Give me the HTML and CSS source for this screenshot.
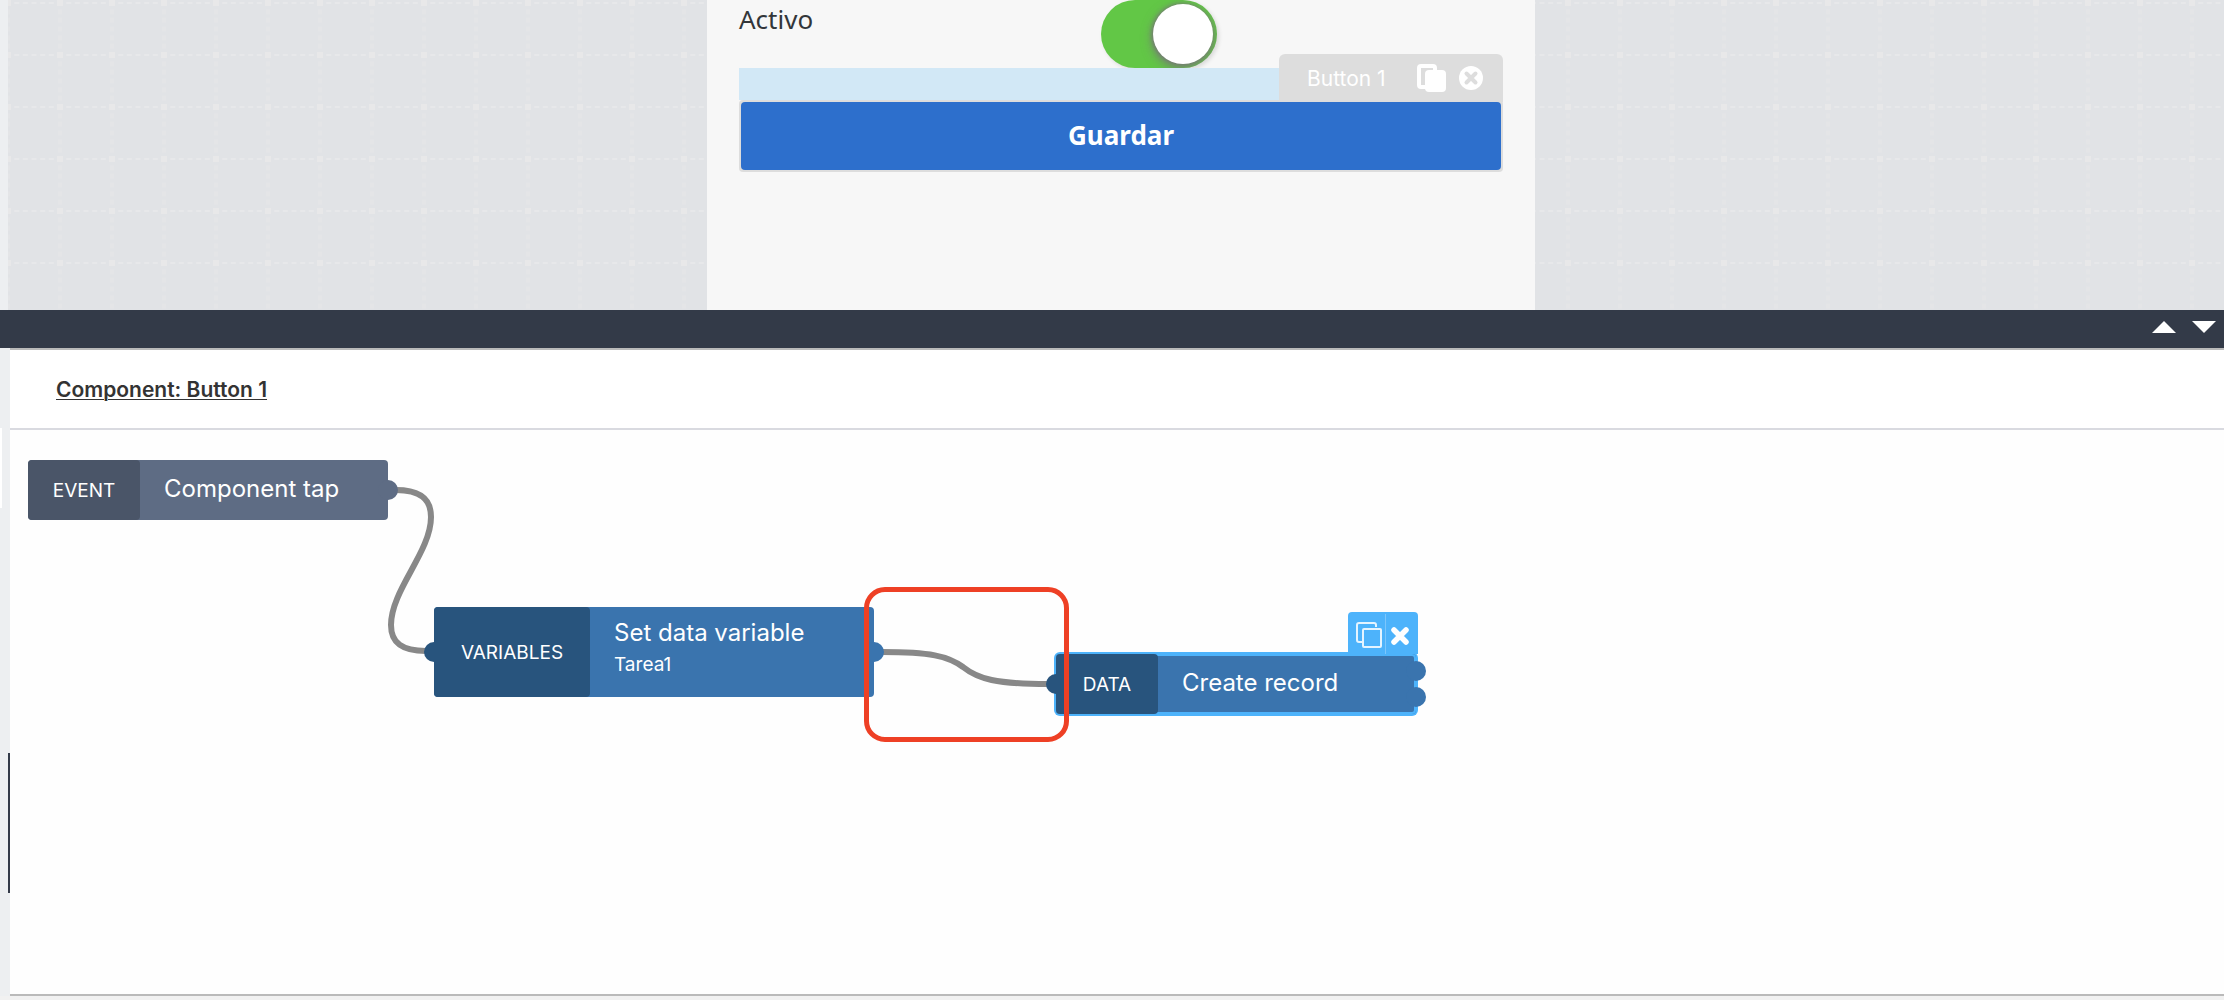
FILE: index.html
```html
<!DOCTYPE html>
<html lang="es">
<head>
<meta charset="utf-8">
<meta name="viewport" content="width=device-width, initial-scale=1">
<title>Component: Button 1</title>
<link rel="stylesheet" href="styles.css">
</head>
<body>
<main class="app">
  <section class="preview">
    <svg class="grid" aria-hidden="true">
      <defs>
        <pattern id="cell" width="52" height="52" patternUnits="userSpaceOnUse">
          <g fill="none" stroke-width="2" stroke-dasharray="5 3.667" stroke-dashoffset="2.5">
            <path d="M0 3H52" stroke="#e7e8ea"/>
            <path d="M0 3V55M0 -49V3M52 3V55M52 -49V3" stroke="#e4e5e7" stroke-width="4"/>
          </g>
          <path d="M0 0V6M52 0V6" stroke="#e8e8e9" stroke-width="6"/>
        </pattern>
      </defs>
      <rect width="100%" height="100%" fill="url(#cell)"/>
    </svg>
    <form class="screen">
      <div class="field">
        <label for="activo">Activo</label>
        <input class="switch" type="checkbox" id="activo" checked>
      </div>
      <div class="drop-zone"></div>
      <div class="selected">
        <div class="tab">
          <span class="tab-name">Button 1</span>
          <button class="tool" type="button" aria-label="Duplicate">
            <svg width="30" height="30" viewBox="0 0 30 30"><rect x="3" y="3" width="16" height="21" rx="2" fill="none" stroke="#fff" stroke-width="4"/><rect x="9" y="7" width="21" height="22" rx="4" fill="#fff"/></svg>
          </button>
          <button class="tool" type="button" aria-label="Remove">
            <svg width="24" height="24" viewBox="0 0 24 24"><circle cx="12" cy="12" r="12" fill="#fff"/><path d="M7.500 7.500l9 9M16.500 7.500l-9 9" stroke="#ddd" stroke-width="4" stroke-linecap="round"/></svg>
          </button>
        </div>
        <button class="save" type="button">Guardar</button>
      </div>
    </form>
  </section>

  <div class="divider">
    <button type="button" aria-label="Expand"><svg width="24" height="12" viewBox="0 0 24 12"><path d="M12 0L24 12H0z" fill="#fff"/></svg></button>
    <button type="button" aria-label="Collapse"><svg width="24" height="12" viewBox="0 0 24 12"><path d="M0 0H24L12 12z" fill="#fff"/></svg></button>
  </div>

  <section class="logic">
    <div class="rail"><span class="rail-gap"></span><span class="rail-handle"></span></div>
    <div class="editor">
      <header class="heading"><a href="#">Component: Button 1</a></header>
      <div class="flow">
        <svg class="wires" aria-hidden="true">
          <g fill="none" stroke="#888" stroke-width="6">
            <path d="M386 60C410 60 421 69 421 87C421 122 381 160 381 195C381 213 392 221 416 221"/>
            <path d="M872 222C920 222 938 226 953 237C968 249 986 254 1038 254"/>
          </g>
        </svg>
        <div class="node node-event">
          <span class="kind">EVENT</span>
          <span class="name">Component tap</span>
          <i class="port out"></i>
        </div>
        <div class="node node-variable">
          <i class="port in"></i>
          <span class="kind">VARIABLES</span>
          <span class="name">Set data variable<small>Tarea1</small></span>
          <i class="port out"></i>
        </div>
        <div class="node node-data">
          <div class="actions">
            <button type="button" aria-label="Duplicate"><svg width="26" height="26" viewBox="0 0 26 26" fill="none" stroke="#e4f4ff" stroke-width="2"><path d="M6 20H3a2 2 0 0 1-2-2V3a2 2 0 0 1 2-2H18a2 2 0 0 1 2 2V5"/><rect x="7" y="7" width="18" height="18" rx="1"/></svg></button>
            <button type="button" aria-label="Delete"><svg width="18" height="18" viewBox="0 0 18 18"><path d="M3 3l12 12M15 3l-12 12" stroke="#fff" stroke-width="5.500" stroke-linecap="round"/></svg></button>
          </div>
          <i class="port in"></i>
          <span class="kind">DATA</span>
          <span class="name">Create record</span>
          <i class="port out first"></i>
          <i class="port out second"></i>
        </div>
        <div class="highlight"></div>
      </div>
    </div>
  </section>
</main>
</body>
</html>
```
FILE: styles.css
```css
* { box-sizing: border-box; }

body {
  margin: 0;
  background: #f1f1f1;
  color: #333;
  font-family: Inter, "Liberation Sans", sans-serif;
}

button {
  display: flex;
  align-items: center;
  justify-content: center;
  padding: 0;
  border: 0;
  background: none;
  color: inherit;
  font: inherit;
  cursor: pointer;
}

svg { display: block; }

.app {
  display: flex;
  flex-direction: column;
  min-height: 100vh;
  overflow: hidden;
}

/* Device preview */
.preview {
  position: relative;
  display: flex;
  justify-content: center;
  padding-left: 10px;
  border-left: 8px solid #edeff1;
  background: #e1e3e6;
}

.grid {
  position: absolute;
  inset: 0;
  width: 100%;
  height: 100%;
}

.screen {
  position: relative;
  width: 828px;
  max-width: 100%;
  padding: 0 32px 138px;
  background: #f7f7f7;
}

.field {
  display: grid;
  grid-template-columns: 362px 1fr;
  height: 68px;
  color: #32363a;
  font-family: "Noto Sans", sans-serif;
  font-size: 26px;
  line-height: 38px;
}

.switch {
  display: flex;
  align-items: center;
  justify-content: flex-end;
  width: 116px;
  height: 68px;
  margin: 0;
  padding: 0 4px;
  overflow: hidden;
  appearance: none;
  border-radius: 34px;
  background: #62c746;
  box-shadow: 2px 2px 4px rgba(0, 0, 0, 0.12);
}

.switch::before {
  content: "";
  width: 60px;
  height: 60px;
  border-radius: 50%;
  background: #fff;
  box-shadow: 0 4px 12px #777, -1px 0 4px #777;
}

.drop-zone {
  position: relative;
  height: 32px;
  background: #d2e8f6;
}

.selected {
  position: relative;
  padding: 2px;
  border-radius: 4px;
  background: #ddd;
}

.tab {
  position: absolute;
  right: 0;
  bottom: 70px;
  display: flex;
  align-items: center;
  width: 224px;
  height: 48px;
  padding: 0 20px 0 28px;
  border-radius: 6px 6px 0 0;
  background: #ddd;
  color: #fff;
}

.tab-name {
  flex: 1;
  font-size: 21px;
}

.tool + .tool { margin-left: 13px; }

.save {
  position: relative;
  width: 100%;
  height: 68px;
  padding-bottom: 2px;
  border-radius: 4px;
  background: #2d6fcc;
  color: #fff;
  font-family: "Noto Sans", sans-serif;
  font-size: 26px;
  font-weight: 700;
}

/* Splitter bar */
.divider {
  display: flex;
  justify-content: flex-end;
  gap: 16px;
  height: 38px;
  padding: 0 8px 4px;
  background: #333a48;
}

/* Logic editor */
.logic {
  display: flex;
  flex: 1;
  min-height: 648px;
  margin-bottom: 4px;
}

.rail {
  display: flex;
  flex: none;
  flex-direction: column;
  width: 10px;
  padding-top: 80px;
  background: #edeff1;
}

.rail-gap {
  width: 2px;
  height: 80px;
  background: #fff;
}

.rail-handle {
  align-self: flex-end;
  width: 2px;
  height: 140px;
  margin-top: 245px;
  background: #333a48;
}

.editor {
  display: flex;
  flex: 1;
  flex-direction: column;
  border-top: 2px solid #bababa;
  border-bottom: 2px solid #bababa;
  background: #fefefe;
}

.heading {
  height: 80px;
  padding: 28px 46px 0;
  border-bottom: 2px solid #d9dae0;
  background: #fff;
  font-size: 21px;
  font-weight: 600;
  line-height: 24px;
}

.heading a {
  color: #333;
  text-underline-offset: 2px;
  text-decoration-thickness: 1px;
}

.flow {
  position: relative;
  flex: 1;
}

.wires {
  position: absolute;
  inset: 0;
  width: 100%;
  height: 100%;
}

.node {
  position: absolute;
  display: flex;
  border-radius: 4px;
  background: var(--body);
  color: #fff;
}

.kind,
.name {
  position: relative;
  display: flex;
  padding: 0 24px;
}

.kind {
  align-items: center;
  justify-content: center;
  border-radius: 4px;
  background: var(--kind);
  font-size: 19px;
}

.name {
  flex-direction: column;
  justify-content: center;
  padding-bottom: 2px;
  font-size: 24px;
  line-height: 32px;
}

.name small {
  font-size: 19px;
}

.node-event {
  --body: #5e6c84;
  --kind: #4a5568;
  left: 18px;
  top: 30px;
  width: 360px;
  height: 60px;
}

.node-event .kind { width: 112px; }

.node-variable,
.node-data {
  --body: #3a74ae;
  --kind: #28547d;
}

.node-variable {
  left: 424px;
  top: 177px;
  width: 440px;
  height: 90px;
}

.node-variable .kind { width: 156px; }

.node-variable .name {
  justify-content: flex-start;
  padding-top: 10px;
}

.node-data {
  left: 1046px;
  top: 224px;
  width: 360px;
  height: 60px;
  box-shadow: inset 0 0 0 2px #4db3fb, 0 0 0 2px #4db3fb;
}

.node-data .kind { width: 102px; }

.port {
  position: absolute;
  top: calc(50% - 10px);
  width: 20px;
  height: 20px;
  border-radius: 50%;
}

.port.in {
  left: -10px;
  background: var(--kind);
}

.port.out {
  right: -10px;
  background: var(--body);
}

.port.first { top: 7px; }
.port.second { top: 33px; }

.actions {
  position: absolute;
  right: -2px;
  bottom: 60px;
  display: grid;
  grid-template-columns: 37px 33px;
  height: 42px;
  padding-top: 2px;
  border-radius: 4px 4px 0 0;
  background: #4db3fb;
}

.actions button { padding: 2px 0 0 4px; }

.actions button + button {
  padding: 4px 4px 0 0;
  border-left: 1px solid #7cc6fc;
}

/* Callout around the connection */
.highlight {
  position: absolute;
  left: 854px;
  top: 157px;
  width: 205px;
  height: 155px;
  border: 5px solid #ee4025;
  border-radius: 21px;
}
```
